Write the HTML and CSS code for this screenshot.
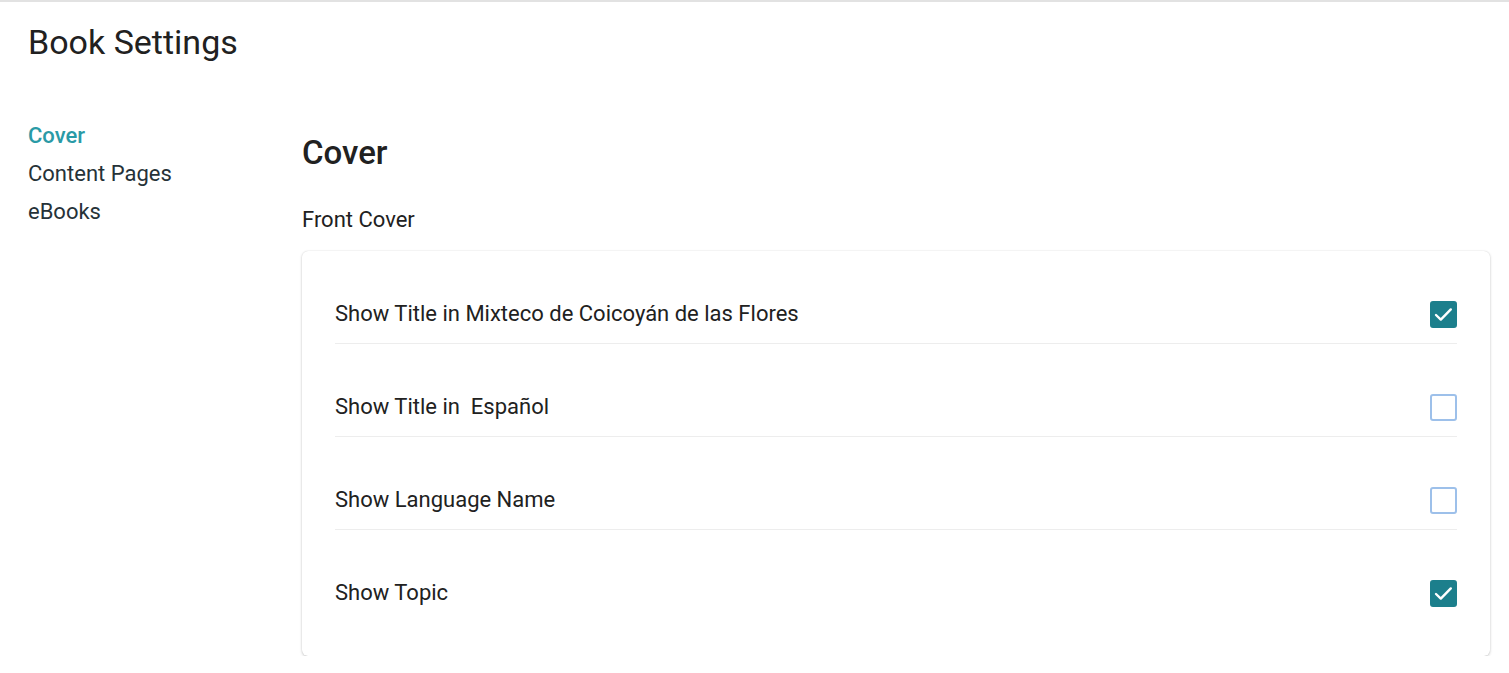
FILE: index.html
```html
<!DOCTYPE html>
<html lang="en">
<head>
<meta charset="utf-8">
<title>Book Settings</title>
<link rel="stylesheet" href="styles.css">
</head>
<body>
<div class="page">
  <h1 class="page-title">Book Settings</h1>
  <div class="layout">
    <nav class="sidebar">
      <a class="nav-item active">Cover</a>
      <a class="nav-item">Content Pages</a>
      <a class="nav-item">eBooks</a>
    </nav>
    <main class="main">
      <h2 class="section-title">Cover</h2>
      <div class="group-label">Front Cover</div>
      <div class="card">
        <label class="row">
          <span class="row-label">Show Title in Mixteco de Coicoyán de las Flores</span>
          <span class="checkbox checked"><svg viewBox="0 0 27 27" width="27" height="27"><path d="M6 14 L10.8 18.6 L20.8 8.4" fill="none" stroke="#fff" stroke-width="2.4" stroke-linecap="round" stroke-linejoin="round"/></svg></span>
        </label>
        <label class="row">
          <span class="row-label">Show Title in &nbsp;Español</span>
          <span class="checkbox"></span>
        </label>
        <label class="row">
          <span class="row-label">Show Language Name</span>
          <span class="checkbox"></span>
        </label>
        <label class="row">
          <span class="row-label">Show Topic</span>
          <span class="checkbox checked"><svg viewBox="0 0 27 27" width="27" height="27"><path d="M6 14 L10.8 18.6 L20.8 8.4" fill="none" stroke="#fff" stroke-width="2.4" stroke-linecap="round" stroke-linejoin="round"/></svg></span>
        </label>
      </div>
    </main>
  </div>
</div>
</body>
</html>
```
FILE: styles.css
```css
* { box-sizing: border-box; }
html, body { margin: 0; padding: 0; background: #fff; }
body {
  font-family: Roboto, "Liberation Sans", Arial, sans-serif;
  color: #212121;
  border-top: 2px solid #e2e2e2;
}
.page { padding: 0 19px 0 28px; }
.page-title {
  margin: 0;
  padding-top: 20px;
  font-size: 34px;
  font-weight: 400;
  line-height: 40px;
}
.layout {
  display: flex;
  margin-top: 60px;
}
.sidebar {
  width: 274px;
  flex: none;
  display: flex;
  flex-direction: column;
  gap: 10px;
}
.nav-item {
  font-size: 22px;
  line-height: 28px;
  color: #263238;
  cursor: pointer;
}
.nav-item.active { color: #2a9aa6; font-weight: 500; }
.main { flex: 1; padding-top: 11px; }
.section-title {
  margin: 0;
  font-size: 33px;
  font-weight: 500;
  line-height: 40px;
}
.group-label {
  margin-top: 33px;
  font-size: 22px;
  line-height: 28px;
}
.card {
  margin-top: 17px;
  background: #fff;
  border-radius: 6px;
  box-shadow: 0 1px 3px rgba(0,0,0,0.2), 0 0 1px rgba(0,0,0,0.16);
  padding: 0 33px 34px;
}
.row {
  display: flex;
  align-items: center;
  justify-content: space-between;
  padding: 49px 0 15px;
  border-bottom: 1px solid #ededed;
}
.row:last-child { border-bottom: none; }
.row-label {
  font-size: 22px;
  line-height: 28px;
  white-space: pre;
}
.checkbox {
  width: 27px;
  height: 27px;
  border-radius: 3px;
  border: 2px solid #9dc0ea;
  position: relative;
}
.checkbox.checked {
  background: #1c7f8c;
  border-color: #1c7f8c;
}
.checkbox svg { position: absolute; left: -2px; top: -2px; display: block; }
```
